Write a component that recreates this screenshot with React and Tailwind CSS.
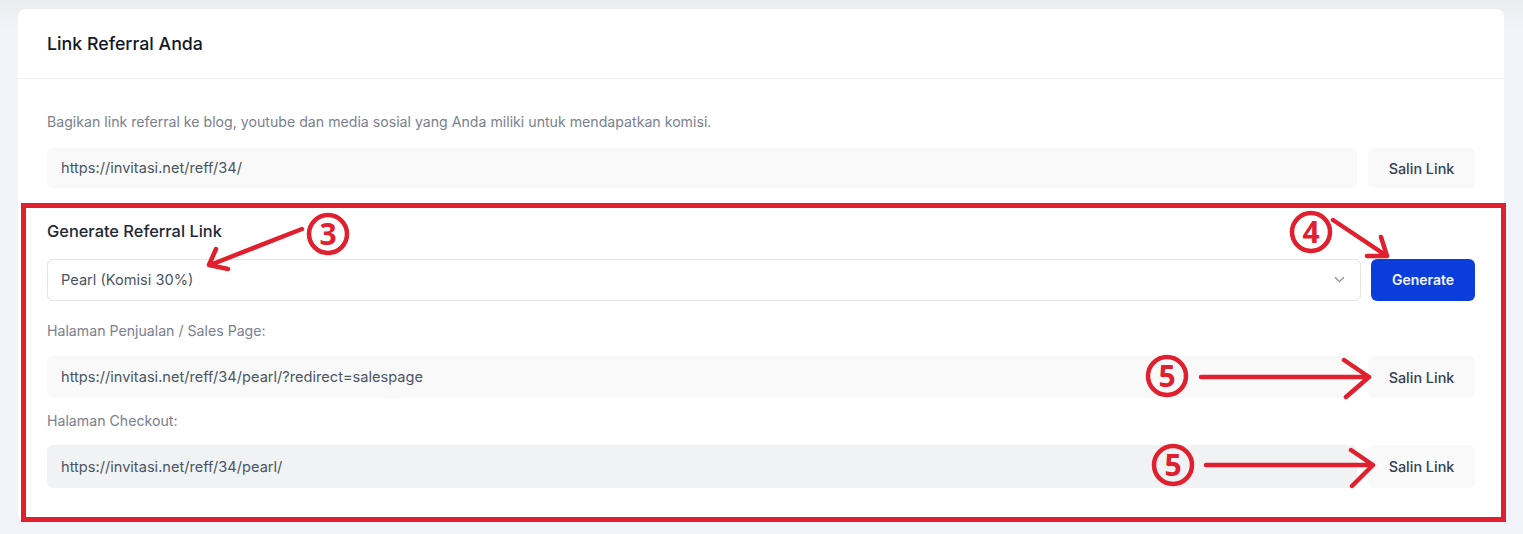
import React from "react";

const Row = ({ url, h, inputBg = "bg-[#f9f9fa]", gap = "gap-[11px]" }) => (
  <div className={`flex ${gap} ${h}`}>
    <div className={`flex-1 flex items-center rounded-md ${inputBg} px-[14px] pt-[2px] text-[14.6px] text-[#4b5563]`}>{url}</div>
    <button className="w-[107px] rounded-md bg-[#f9f9fa] pt-[1px] text-[14.4px] font-medium text-[#374151]">Salin Link</button>
  </div>
);

const Num = ({ n, x, y, r = 19 }) => (
  <g>
    <circle cx={x} cy={y} r={r} fill="none" stroke="#e0202e" strokeWidth="4.5" />
    <text x={x} y={y + 10.5} textAnchor="middle" fontFamily="'Open Sans', sans-serif" fontWeight="700" fontSize="30" fill="#e0202e">{n}</text>
  </g>
);

export default function App() {
  return (
    <div className="relative h-[534px] w-[1523px] overflow-hidden bg-[linear-gradient(#eaecef,#f1f5f9_30px)] pl-[18px] pr-[19px] pt-[9px]" style={{ fontFamily: "Inter, sans-serif" }}>
      <div className="h-[512px] rounded-lg bg-white">
        <div className="flex h-[70px] items-center border-b border-[#eef0f3] px-[29px] pt-[2px] text-[17.8px] font-medium text-[#111827]">Link Referral Anda</div>
        <div className="px-[29px] pt-[33px]">
          <p className="text-[14.15px] leading-5 text-[#7b8190]">Bagikan link referral ke blog, youtube dan media sosial yang Anda miliki untuk mendapatkan komisi.</p>
          <div className="mt-[16px]"><Row url="https://invitasi.net/reff/34/" h="h-[40px]" /></div>
          <h3 className="mt-[31px] text-[16.4px] font-medium leading-6 text-[#1f2937]">Generate Referral Link</h3>
          <div className="mt-[16px] flex h-[42px] gap-[10px]">
            <div className="flex flex-1 items-center justify-between rounded-md border border-[#e2e4e8] bg-white pl-[13px] pr-[15px] pt-[2px] text-[14.6px] text-[#4b5563]">
              <span>Pearl (Komisi 30%)</span>
              <svg className="mb-[3px]" width="11" height="7" viewBox="0 0 12 8" fill="none" stroke="#8b9199" strokeWidth="1.5"><path d="M1 1.5l5 5 5-5" /></svg>
            </div>
            <button className="w-[104px] rounded-md bg-[#0b3ddb] pb-[2px] text-[14px] font-semibold text-[#f1f5ff]">Generate</button>
          </div>
          <p className="mt-[20px] text-[14.15px] leading-5 text-[#7b8190]">Halaman Penjualan / Sales Page:</p>
          <div className="mt-[15px]"><Row url="https://invitasi.net/reff/34/pearl/?redirect=salespage" h="h-[42px]" /></div>
          <p className="mt-[13px] text-[14.15px] leading-5 text-[#7b8190]">Halaman Checkout:</p>
          <div className="mt-[14px]"><Row url="https://invitasi.net/reff/34/pearl/" h="h-[43px]" inputBg="bg-[#f1f2f4]" /></div>
        </div>
      </div>
      <svg className="absolute left-0 top-0" width="1523" height="534" fill="none">
        <rect x="23.5" y="205.5" width="1480" height="314" stroke="#e0202e" strokeWidth="5" />
        <g stroke="#e0202e" strokeWidth="4.5" strokeLinecap="round" strokeLinejoin="round">
          <path d="M302 229L210 265M216 249L209 265L228 269" />
          <path d="M1333 220L1387 256M1381 237L1387 256L1367 256" />
          <path d="M1201 377H1369M1344 360L1369 377L1346 397" />
          <path d="M1206 465H1373M1351 450L1373 465L1352 486" />
        </g>
        <Num n="3" x={328} y={234} />
        <Num n="4" x={1311} y={232} />
        <Num n="5" x={1167} y={376} />
        <Num n="5" x={1173} y={465} />
      </svg>
    </div>
  );
}
